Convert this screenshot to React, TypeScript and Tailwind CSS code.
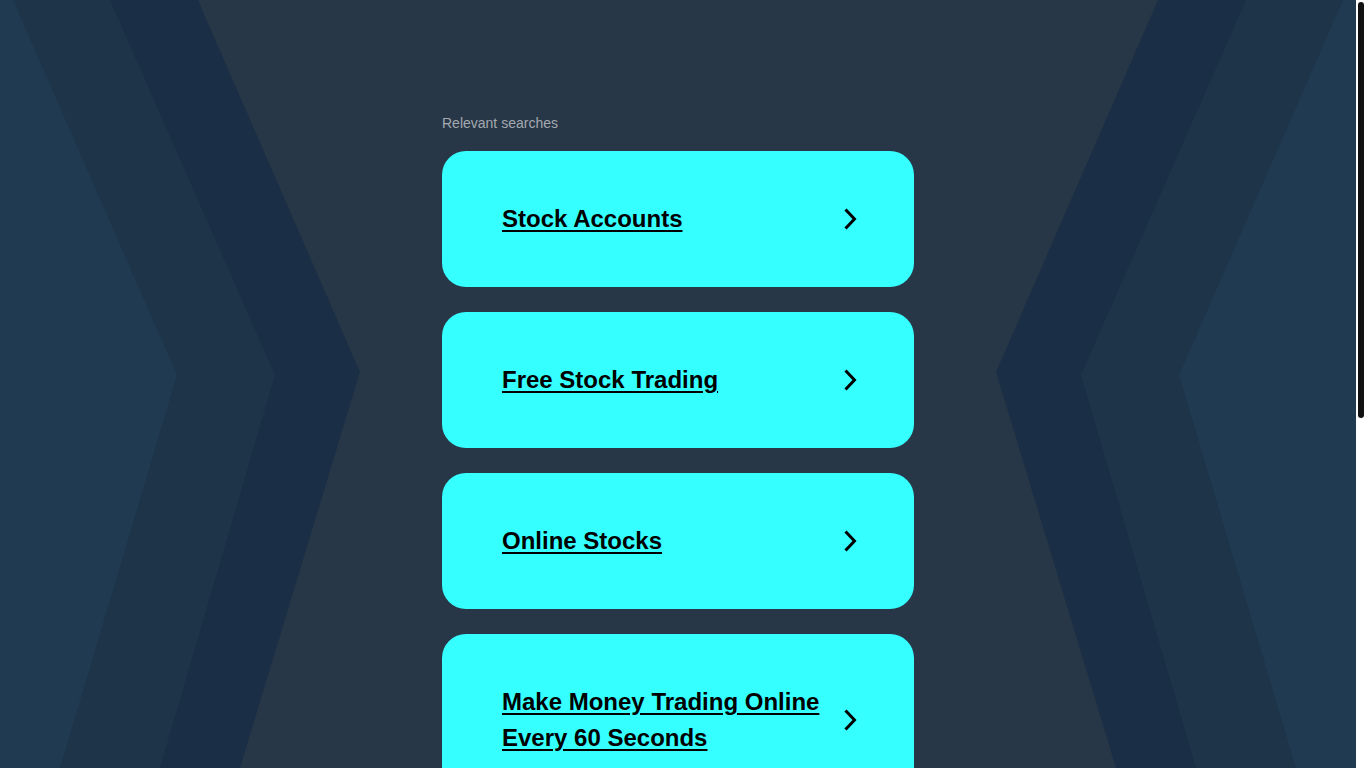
import React from "react";

const searches = [
  "Stock Accounts",
  "Free Stock Trading",
  "Online Stocks",
  "Make Money Trading Online Every 60 Seconds",
  "Best Stock Trading Platforms",
  "Stock Market Investing",
];

const Chevron = () => (
  <svg width="14" height="24" viewBox="0 0 14 24" fill="none" className="shrink-0">
    <path d="M1.5 2.5 L10.5 12 L1.5 21.5" stroke="#000" strokeWidth="3" strokeLinejoin="miter" />
  </svg>
);

const Background = () => (
  <svg className="absolute inset-0 h-full w-full" viewBox="0 0 1356 768" preserveAspectRatio="none">
    <rect width="1356" height="768" fill="#283747" />
    {/* left chevrons */}
    <polygon points="0,0 198,0 360,372 240,768 0,768" fill="#1a2f45" />
    <polygon points="0,0 110,0 275,375 160,768 0,768" fill="#1e3449" />
    <polygon points="0,0 13,0 177,375 60,768 0,768" fill="#203a51" />
    {/* right chevrons */}
    <polygon points="1356,0 1158,0 996,372 1116,768 1356,768" fill="#1a2f45" />
    <polygon points="1356,0 1246,0 1081,375 1196,768 1356,768" fill="#1e3449" />
    <polygon points="1356,0 1343,0 1179,375 1296,768 1356,768" fill="#203a51" />
  </svg>
);

export default function App() {
  return (
    <div className="flex h-screen w-full overflow-hidden bg-white font-['Liberation_Sans',Arial,sans-serif]">
      <div className="relative flex-1 overflow-hidden">
        <Background />
        <div className="relative mx-auto w-[472px] pt-[113px]">
          <p className="text-[14px] leading-[20px] text-[#a3a9b0] mb-[18px]">Relevant searches</p>
          <div className="flex flex-col gap-[25px]">
            {searches.map((s) => (
              <a
                key={s}
                href="#"
                className="flex items-center rounded-[24px] bg-[#36ffff] pl-[60px] pr-[56px] py-[50px]"
              >
                <span className="flex-1 pr-4 text-[24px] leading-[36px] font-bold text-black underline underline-offset-[3px]">
                  {s}
                </span>
                <Chevron />
              </a>
            ))}
          </div>
        </div>
      </div>
      {/* scrollbar */}
      <div className="w-[10px] shrink-0 bg-white px-[2px] pt-[2px]">
        <div className="h-[416px] rounded-[3px] bg-[#111]" />
      </div>
    </div>
  );
}
